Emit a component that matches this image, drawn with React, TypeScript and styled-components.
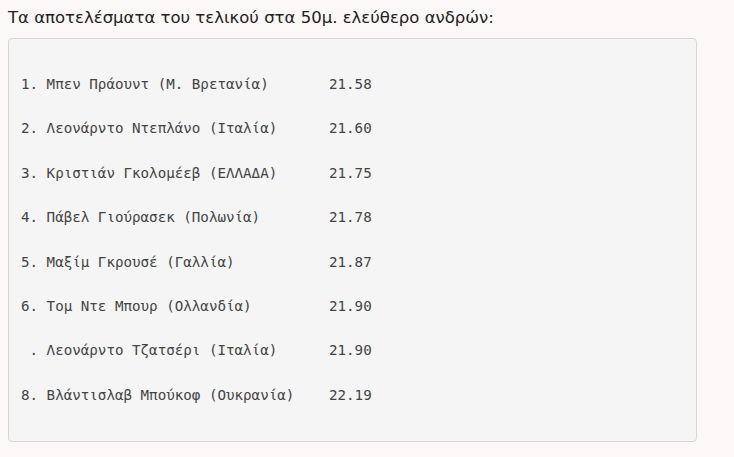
import React from "react";
import styled, { createGlobalStyle } from "styled-components";

const Global = createGlobalStyle`
  html, body { margin: 0; padding: 0; background: #fcf8f7; }
  body { width: 734px; height: 457px; overflow: hidden; }
`;

const Page = styled.div`
  padding: 0 37px 0 8px;
  display: flex;
  flex-direction: column;
`;

const Title = styled.p`
  margin: 0;
  height: 38px;
  line-height: 36px;
  font-family: "DejaVu Sans", Verdana, sans-serif;
  font-size: 16.5px;
  color: #222;
`;

const Pre = styled.div`
  box-sizing: border-box;
  height: 404px;
  background: #f5f5f5;
  border: 1px solid #d6d6d6;
  border-radius: 4px;
  padding: 34px 12px 0 12px;
  display: flex;
  flex-direction: column;
  gap: 22.2px;
  font-family: "DejaVu Sans Mono", "Liberation Mono", monospace;
  font-size: 14.2px;
  color: #444;
`;

const Row = styled.div`
  display: flex;
  height: 22.2px;
  line-height: 22.2px;
  white-space: pre;
`;

const Name = styled.span`
  width: 308px;
  flex: none;
`;

const Time = styled.span``;

const results: [string, string][] = [
  ["1. Μπεν Πράουντ (Μ. Βρετανία)", "21.58"],
  ["2. Λεονάρντο Ντεπλάνο (Ιταλία)", "21.60"],
  ["3. Κριστιάν Γκολομέεβ (ΕΛΛΑΔΑ)", "21.75"],
  ["4. Πάβελ Γιούρασεκ (Πολωνία)", "21.78"],
  ["5. Μαξίμ Γκρουσέ (Γαλλία)", "21.87"],
  ["6. Τομ Ντε Μπουρ (Ολλανδία)", "21.90"],
  [" . Λεονάρντο Τζατσέρι (Ιταλία)", "21.90"],
  ["8. Βλάντισλαβ Μπούκοφ (Ουκρανία)", "22.19"],
];

export default function App() {
  return (
    <>
      <Global />
      <Page>
        <Title>Τα αποτελέσματα του τελικού στα 50μ. ελεύθερο ανδρών:</Title>
        <Pre>
          {results.map(([n, t], i) => (
            <Row key={i}>
              <Name>{n}</Name>
              <Time>{t}</Time>
            </Row>
          ))}
        </Pre>
      </Page>
    </>
  );
}
